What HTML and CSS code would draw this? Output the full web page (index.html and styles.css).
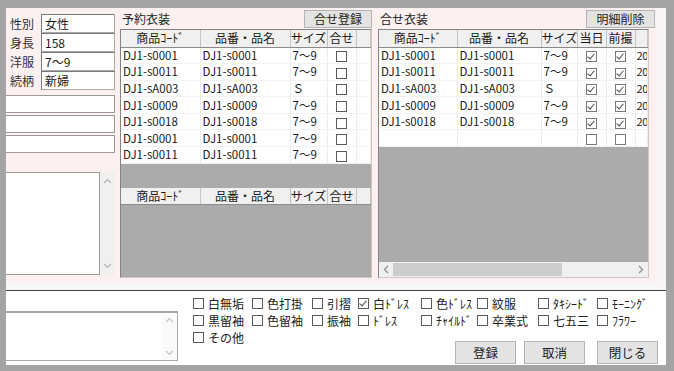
FILE: index.html
```html
<!DOCTYPE html>
<html lang="ja">
<head>
    <meta charset="UTF-8">
    <title>衣装登録</title>
    <link rel="stylesheet" href="styles.css">
</head>
<body>

<div class="frame">
    <div class="window">

        <div class="top">
            <!-- 左：顧客情報 -->
            <div class="col-left">
                <div class="field"><span class="lbl">性別</span><span class="inp">女性</span></div>
                <div class="field"><span class="lbl">身長</span><span class="inp">158</span></div>
                <div class="field"><span class="lbl">洋服</span><span class="inp">7～9</span></div>
                <div class="field"><span class="lbl">続柄</span><span class="inp">新婦</span></div>

                <div class="bars">
                    <div class="bar"></div>
                    <div class="bar"></div>
                    <div class="bar"></div>
                </div>

                <div class="memo">
                    <div class="memo-text"></div>
                    <div class="vscroll">
                        <svg width="9" height="6" viewBox="0 0 9 6"><path d="M1 5 L4.5 1.5 L8 5" fill="none" stroke="#b4b4b4" stroke-width="1.2"/></svg>
                        <svg width="9" height="6" viewBox="0 0 9 6"><path d="M1 1 L4.5 4.5 L8 1" fill="none" stroke="#b4b4b4" stroke-width="1.2"/></svg>
                    </div>
                </div>
            </div>

            <!-- 中：予約衣装 -->
            <div class="col-mid">
                <div class="head">
                    <span class="title">予約衣装</span>
                    <button class="btn btn-mid">合せ登録</button>
                </div>
                <div class="gridbox">
                    <table class="grid grid-mid">
                        <colgroup><col style="width:79px"><col style="width:90px"><col style="width:37px"><col style="width:29px"><col></colgroup>
                        <tr><th>商品ｺｰﾄﾞ</th><th>品番・品名</th><th>サイズ</th><th>合せ</th><th></th></tr>
                        <tr><td>DJ1-s0001</td><td>DJ1-s0001</td><td>7～9</td><td class="c"><span class="cb"></span></td><td></td></tr>
                        <tr><td>DJ1-s0011</td><td>DJ1-s0011</td><td>7～9</td><td class="c"><span class="cb"></span></td><td></td></tr>
                        <tr><td>DJ1-sA003</td><td>DJ1-sA003</td><td>Ｓ</td><td class="c"><span class="cb"></span></td><td></td></tr>
                        <tr><td>DJ1-s0009</td><td>DJ1-s0009</td><td>7～9</td><td class="c"><span class="cb"></span></td><td></td></tr>
                        <tr><td>DJ1-s0018</td><td>DJ1-s0018</td><td>7～9</td><td class="c"><span class="cb"></span></td><td></td></tr>
                        <tr><td>DJ1-s0001</td><td>DJ1-s0001</td><td>7～9</td><td class="c"><span class="cb"></span></td><td></td></tr>
                        <tr><td>DJ1-s0011</td><td>DJ1-s0011</td><td>7～9</td><td class="c"><span class="cb"></span></td><td></td></tr>
                    </table>
                    <table class="grid grid-mid grid-second">
                        <colgroup><col style="width:79px"><col style="width:90px"><col style="width:37px"><col style="width:29px"><col></colgroup>
                        <tr><th>商品ｺｰﾄﾞ</th><th>品番・品名</th><th>サイズ</th><th>合せ</th><th></th></tr>
                    </table>
                </div>
            </div>

            <!-- 右：合せ衣装 -->
            <div class="col-right">
                <div class="head">
                    <span class="title">合せ衣装</span>
                    <button class="btn btn-right">明細削除</button>
                </div>
                <div class="gridbox gridbox-right">
                    <table class="grid grid-right">
                        <colgroup><col style="width:78px"><col style="width:84px"><col style="width:36px"><col style="width:29px"><col style="width:29px"><col></colgroup>
                        <tr><th>商品ｺｰﾄﾞ</th><th>品番・品名</th><th>サイズ</th><th>当日</th><th>前撮</th><th></th></tr>
                        <tr><td>DJ1-s0001</td><td>DJ1-s0001</td><td>7～9</td><td class="c"><span class="cb on"></span></td><td class="c"><span class="cb on"></span></td><td class="date">20</td></tr>
                        <tr><td>DJ1-s0011</td><td>DJ1-s0011</td><td>7～9</td><td class="c"><span class="cb on"></span></td><td class="c"><span class="cb on"></span></td><td class="date">20</td></tr>
                        <tr><td>DJ1-sA003</td><td>DJ1-sA003</td><td>Ｓ</td><td class="c"><span class="cb on"></span></td><td class="c"><span class="cb on"></span></td><td class="date">20</td></tr>
                        <tr><td>DJ1-s0009</td><td>DJ1-s0009</td><td>7～9</td><td class="c"><span class="cb on"></span></td><td class="c"><span class="cb on"></span></td><td class="date">20</td></tr>
                        <tr><td>DJ1-s0018</td><td>DJ1-s0018</td><td>7～9</td><td class="c"><span class="cb on"></span></td><td class="c"><span class="cb on"></span></td><td class="date">20</td></tr>
                        <tr><td></td><td></td><td></td><td class="c"><span class="cb"></span></td><td class="c"><span class="cb"></span></td><td></td></tr>
                    </table>
                    <div class="fill"></div>
                    <div class="hscroll">
                        <svg width="6" height="9" viewBox="0 0 6 9"><path d="M5 1 L1.5 4.5 L5 8" fill="none" stroke="#8a8a8a" stroke-width="1.2"/></svg>
                        <div class="track"><div class="thumb"></div></div>
                        <svg width="6" height="9" viewBox="0 0 6 9"><path d="M1 1 L4.5 4.5 L1 8" fill="none" stroke="#8a8a8a" stroke-width="1.2"/></svg>
                    </div>
                </div>
            </div>
        </div>

        <div class="bottom">
            <div class="note">
                <div class="note-text"></div>
                <div class="vscroll">
                    <svg width="9" height="6" viewBox="0 0 9 6"><path d="M1 5 L4.5 1.5 L8 5" fill="none" stroke="#c4c4c4" stroke-width="1.2"/></svg>
                    <svg width="9" height="6" viewBox="0 0 9 6"><path d="M1 1 L4.5 4.5 L8 1" fill="none" stroke="#c4c4c4" stroke-width="1.2"/></svg>
                </div>
            </div>

            <div class="bottom-right">
                <div class="kinds">
                    <label class="kind"><span class="cb"></span>白無垢</label>
                    <label class="kind"><span class="cb"></span>色打掛</label>
                    <label class="kind"><span class="cb"></span>引摺</label>
                    <label class="kind"><span class="cb on"></span>白ﾄﾞﾚｽ</label>
                    <label class="kind"><span class="cb"></span>色ﾄﾞﾚｽ</label>
                    <label class="kind"><span class="cb"></span>紋服</label>
                    <label class="kind"><span class="cb"></span>ﾀｷｼｰﾄﾞ</label>
                    <label class="kind"><span class="cb"></span>ﾓｰﾆﾝｸﾞ</label>
                    <label class="kind"><span class="cb"></span>黒留袖</label>
                    <label class="kind"><span class="cb"></span>色留袖</label>
                    <label class="kind"><span class="cb"></span>振袖</label>
                    <label class="kind"><span class="cb"></span>ﾄﾞﾚｽ</label>
                    <label class="kind"><span class="cb"></span>ﾁｬｲﾙﾄﾞ</label>
                    <label class="kind"><span class="cb"></span>卒業式</label>
                    <label class="kind"><span class="cb"></span>七五三</label>
                    <label class="kind"><span class="cb"></span>ﾌﾗﾜｰ</label>
                </div>
                <div class="last-row">
                    <label class="kind"><span class="cb"></span>その他</label>
                    <div class="actions">
                        <button class="btn btn-act">登録</button>
                        <button class="btn btn-act">取消</button>
                        <button class="btn btn-act btn-close">閉じる</button>
                    </div>
                </div>
            </div>
        </div>

    </div>
</div>

</body>
</html>
```

FILE: styles.css
```css
* {
    margin: 0;
    padding: 0;
    box-sizing: border-box;
}

body {
    width: 674px;
    height: 371px;
    overflow: hidden;
    font-family: "Noto Sans CJK JP", "Liberation Sans", sans-serif;
    font-size: 12px;
    color: #1a1a1a;
}

.frame {
    width: 674px;
    height: 371px;
    padding: 8px 8px 6px 6px;
    background-color: #a4a4a4;
}

.window {
    width: 660px;
    height: 357px;
    background-color: #f8f6f6;
    display: flex;
    flex-direction: column;
    overflow: hidden;
}

/* ============ 上段 ============ */

.top {
    width: 651px;
    height: 275px;
    flex: none;
    background-color: #fcf0f0;
    display: flex;
}

.col-left {
    width: 110px;
    padding-top: 6px;
}

.field {
    height: 19px;
    display: flex;
    align-items: center;
}

.lbl {
    width: 35px;
    padding-left: 4px;
    line-height: 19px;
    color: #333;
}

.inp {
    width: 74px;
    height: 19px;
    padding-left: 3px;
    line-height: 17px;
    background-color: #fff;
    border: solid 1px #a8a8a8;
    border-top-color: #7a7a7a;
    border-left-color: #7a7a7a;
}

.bars {
    margin-top: 5px;
}

.bar {
    width: 109px;
    height: 18px;
    margin-bottom: 2px;
    background-color: #fff;
    border: solid 1px #9a9a9a;
    border-left: none;
}

.memo {
    width: 109px;
    height: 103px;
    margin-top: 19px;
    display: flex;
}

.memo-text {
    flex: 1;
    background-color: #fff;
    border: solid 1px #9a9a9a;
    border-left: none;
}

.vscroll {
    width: 15px;
    background-color: #f0f0f0;
    display: flex;
    flex-direction: column;
    justify-content: space-between;
    align-items: center;
    padding: 6px 0;
}

.col-mid {
    width: 252px;
    margin-left: 4px;
}

.col-right {
    width: 279px;
    margin-left: 6px;
}

.head {
    height: 21px;
    display: flex;
    justify-content: space-between;
    align-items: flex-start;
}

.title {
    padding-left: 2px;
    line-height: 21px;
    color: #222;
}

.btn {
    height: 18px;
    margin-top: 2px;
    font-family: inherit;
    font-size: 12px;
    color: #222;
    background-color: #e3e3e3;
    border: solid 1px #b4b4b4;
    line-height: 16px;
}

.btn-mid {
    width: 68px;
}

.btn-right {
    width: 69px;
    margin-right: 2px;
}

/* ============ グリッド ============ */

.gridbox {
    height: 249px;
    background-color: #ababab;
    border: solid 1px #848484;
    border-right-color: #c8c8c8;
    border-bottom-color: #c8c8c8;
    overflow: hidden;
    display: flex;
    flex-direction: column;
}

.gridbox-right {
    width: 271px;
}

.grid {
    width: 100%;
    border-collapse: collapse;
    table-layout: fixed;
    background-color: #fff;
}

.grid th {
    height: 17px;
    font-weight: normal;
    text-align: center;
    white-space: nowrap;
    overflow: hidden;
    background-color: #f0f0f0;
    border-right: solid 1px #c4c4c4;
    border-bottom: solid 1px #8a8a8a;
    line-height: 16px;
}

.grid td {
    height: 16.6px;
    padding-left: 2px;
    white-space: nowrap;
    overflow: hidden;
    border-right: solid 1px #ececec;
    border-bottom: solid 1px #f2f2f2;
    line-height: 15px;
    font-size: 11.5px;
}

.grid td.c {
    padding-left: 0;
    text-align: center;
}

.grid td.date {
    padding-left: 1px;
    font-size: 11px;
    letter-spacing: -0.3px;
}

.grid-second {
    margin-top: 24px;
}

.fill {
    flex: 1;
}

.cb {
    display: inline-block;
    width: 11px;
    height: 11px;
    vertical-align: middle;
    background-color: #fff;
    border: solid 1px #5a5a5a;
    position: relative;
}

.cb.on::after {
    content: "";
    position: absolute;
    left: 2px;
    top: 0;
    width: 3px;
    height: 6px;
    border: solid #4a4a4a;
    border-width: 0 1px 1px 0;
    transform: rotate(40deg);
}

.grid-right .cb {
    border-color: #7a7a7a;
}

.hscroll {
    height: 15px;
    background-color: #f0f0f0;
    display: flex;
    align-items: center;
    padding: 0 4px;
}

.track {
    flex: 1;
    height: 100%;
    padding: 1px 0 1px 4px;
}

.thumb {
    width: 169px;
    height: 100%;
    background-color: #cdcdcd;
}

/* ============ 下段 ============ */

.bottom {
    flex: 1;
    margin-top: 7px;
    border-top: solid 1px #3a3a3a;
    background-color: #fff;
    display: flex;
}

.note {
    width: 172px;
    height: 50px;
    margin-top: 20px;
    display: flex;
    border: solid 1px #a8a8a8;
    border-left: none;
    border-top-width: 2px;
}

.note-text {
    flex: 1;
}

.note .vscroll {
    background-color: #fafafa;
    padding: 4px 0;
}

.bottom-right {
    width: 465px;
    margin-left: 15px;
    padding-top: 4px;
}

.kinds {
    display: grid;
    grid-template-columns: 59px 60px 46px 63px 56px 61px 59px 61px;
    grid-auto-rows: 17px;
}

.kind {
    display: flex;
    align-items: center;
    gap: 4px;
    white-space: nowrap;
    height: 17px;
    color: #222;
}

.last-row {
    display: flex;
    align-items: flex-start;
    justify-content: space-between;
}

.actions {
    display: flex;
    margin-top: 12px;
}

.btn-act {
    width: 61px;
    height: 23px;
    margin-top: 0;
    margin-left: 8px;
    line-height: 21px;
    font-size: 12.5px;
}

.btn-close {
    margin-left: 12px;
}
```
